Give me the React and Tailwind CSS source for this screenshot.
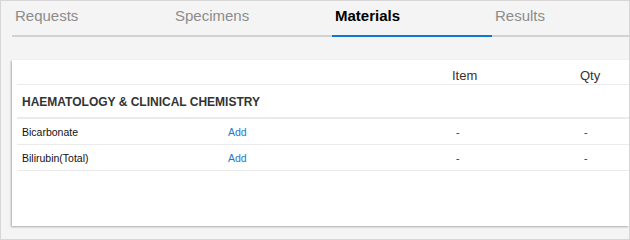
import React from 'react';

const tabs = ['Requests', 'Specimens', 'Materials', 'Results'];

const rows = [
  { name: 'Bicarbonate', item: '-', qty: '-' },
  { name: 'Bilirubin(Total)', item: '-', qty: '-' },
];

export default function App() {
  const active = 'Materials';

  return (
    <div className="w-[630px] h-[240px] overflow-hidden border border-[#d6d6d6] bg-[#f4f4f4] pl-[11px] flex flex-col font-['Liberation_Sans',Arial,sans-serif]">
      {/* Tabs */}
      <div className="flex border-b-2 border-[#d2d2d2]">
        {tabs.map(tab => (
          <div
            key={tab}
            className={`w-[160px] shrink-0 h-[36px] -mb-[2px] pl-[3px] pb-[4px] flex items-center text-[15px] border-b-2 ${
              tab === active ? 'font-bold text-black border-[#0b78d4]' : 'text-[#8c8c8c] border-transparent'
            }`}
          >
            {tab}
          </div>
        ))}
      </div>

      {/* Card */}
      <div className="mt-[23px] h-[166px] bg-white pl-[5px] shadow-[-1px_1px_2px_rgba(0,0,0,0.3)]">
        {/* Header */}
        <div className="grid grid-cols-[206px_224px_128px_1fr] h-[25px] pt-[8px] border-b border-[#ebebeb] text-[13px] leading-[16px] text-[#333]">
          <div />
          <div />
          <div className="pl-[5px]">Item</div>
          <div className="pl-[5px]">Qty</div>
        </div>

        {/* Section */}
        <div className="h-[34px] pt-[2px] pl-[5px] flex items-center border-b-2 border-[#ebebeb] text-[12px] font-bold text-[#333]">
          HAEMATOLOGY &amp; CLINICAL CHEMISTRY
        </div>

        {rows.map(row => (
          <div
            key={row.name}
            className="grid grid-cols-[206px_224px_128px_1fr] h-[26px] pt-[2px] items-center border-b border-[#ebebeb] text-[10.5px] text-[#111]"
          >
            <div className="pl-[5px]">{row.name}</div>
            <div className="pl-[5px] text-[#1a7ad4]">Add</div>
            <div className="pl-[9px] text-[#333]">{row.item}</div>
            <div className="pl-[9px] text-[#333]">{row.qty}</div>
          </div>
        ))}
      </div>
    </div>
  );
}
